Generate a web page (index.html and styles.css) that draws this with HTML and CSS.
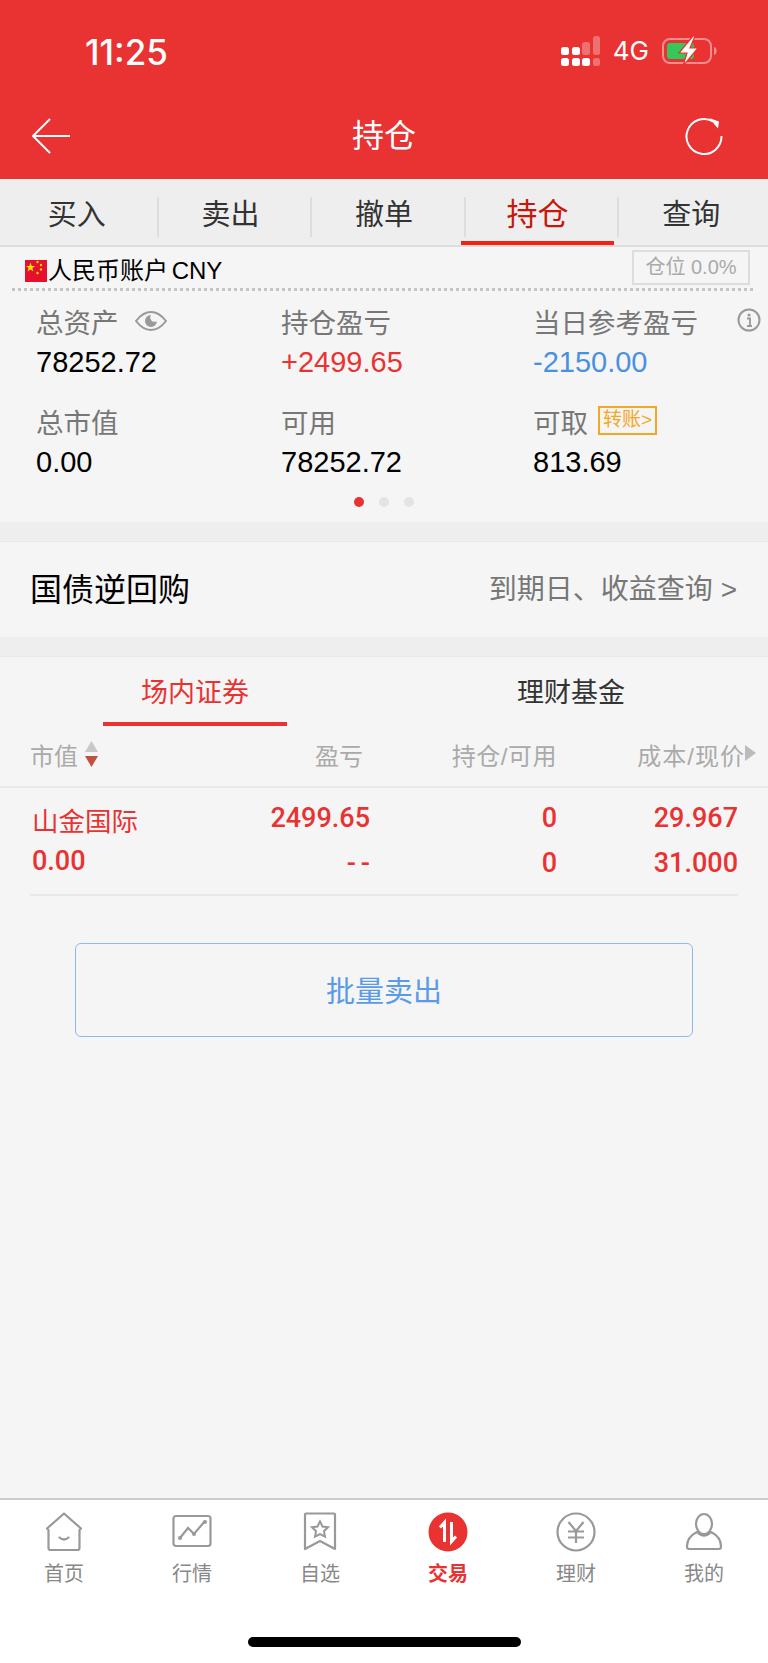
FILE: index.html
```html
<!DOCTYPE html>
<html lang="zh-CN">
<head>
    <meta charset="UTF-8">
    <meta name="viewport" content="width=device-width, initial-scale=1.0">
    <title>持仓</title>
    <link rel="stylesheet" href="styles.css">
</head>
<body>
    <header class="topbar">
        <div class="status">
            <span class="time">11:25</span>
            <div class="status-right">
                <svg class="signal" width="40" height="30" viewBox="0 0 40 30">
                    <g fill="#fff">
                        <rect x="0" y="11" width="8" height="8" rx="2.5"/>
                        <rect x="11" y="11" width="8" height="8" rx="2.5"/>
                        <rect x="0" y="22" width="8" height="8" rx="2.5"/>
                        <rect x="11" y="22" width="8" height="8" rx="2.5"/>
                        <rect x="21" y="22" width="8" height="8" rx="2.5"/>
                    </g>
                    <g fill="#fff" opacity="0.3">
                        <rect x="21" y="6" width="8" height="13" rx="2.5"/>
                        <rect x="32" y="0" width="7" height="19" rx="2.5"/>
                        <rect x="32" y="22" width="7" height="8" rx="2.5"/>
                    </g>
                </svg>
                <span class="net">4G</span>
                <svg class="battery" width="56" height="30" viewBox="0 0 56 30">
                    <rect x="1" y="3" width="48" height="24" rx="7" fill="none" stroke="#fff" stroke-opacity="0.45" stroke-width="2"/>
                    <rect x="5" y="7" width="27" height="16" rx="3" fill="#35c759"/>
                    <path d="M52 11c2 .5 2.5 2 2.5 4s-.5 3.500-2.500 4z" fill="#fff" opacity="0.45"/>
                    <path d="M31 0L17 17h8l-4 13 15-18h-8l5-12z" fill="#fff" stroke="#e93232" stroke-width="1.200"/>
                </svg>
            </div>
        </div>
        <div class="navbar">
            <svg width="40" height="36" viewBox="0 0 40 36">
                <path d="M19 1L2 18l17 17M2 18h37" fill="none" stroke="#fff" stroke-width="2"/>
            </svg>
            <span class="nav-title">持仓</span>
            <svg class="nav-refresh" width="38" height="38" viewBox="0 0 38 38">
                <path d="M28 4.500A17.500 17.500 0 1 0 36.500 19" fill="none" stroke="#fff" stroke-width="2"/>
                <path d="M24 1l10 3.500-1 7z" fill="#fff"/>
            </svg>
        </div>
    </header>

    <nav class="tabs">
        <a class="tab">买入</a>
        <a class="tab">卖出</a>
        <a class="tab">撤单</a>
        <a class="tab active">持仓</a>
        <a class="tab">查询</a>
    </nav>

    <main class="main">
        <section class="account">
            <div class="account-head">
                <div class="account-name">
                    <svg class="flag" width="22" height="22" viewBox="0 0 22 22">
                        <rect width="22" height="22" fill="#e60f2d"/>
                        <path d="M5.500 2.500l1.200 3.400h3.500l-2.800 2.200 1 3.400-2.900-2-2.900 2 1-3.400L.8 5.900h3.500z" fill="#ffde00"/>
                        <g fill="#ffde00">
                            <circle cx="12.500" cy="2" r="1.200"/>
                            <circle cx="16" cy="5" r="1.200"/>
                            <circle cx="16" cy="9.500" r="1.200"/>
                            <circle cx="12.500" cy="13" r="1.200"/>
                        </g>
                    </svg>
                    <span>人民币账户 CNY</span>
                </div>
                <span class="position-tag">仓位 0.0%</span>
            </div>
            <div class="stats">
                <div class="stat">
                    <div class="stat-label">总资产
                        <svg class="eye" width="32" height="20" viewBox="0 0 32 20">
                            <path d="M1 10C6 3.500 11 1 16 1s10 2.500 15 9c-5 6.500-10 9-15 9S6 16.500 1 10z" fill="none" stroke="#999" stroke-width="2"/>
                            <path d="M16 4a6 6 0 1 0 6 6c-1 1.500-5 1-6-1s-1-3.500 0-5z" fill="#999"/>
                        </svg>
                    </div>
                    <div class="stat-value">78252.72</div>
                </div>
                <div class="stat">
                    <div class="stat-label">持仓盈亏</div>
                    <div class="stat-value up">+2499.65</div>
                </div>
                <div class="stat">
                    <div class="stat-label">当日参考盈亏</div>
                    <div class="stat-value down">-2150.00</div>
                    <svg class="info" width="24" height="24" viewBox="0 0 24 24">
                        <circle cx="12" cy="12" r="10.500" fill="none" stroke="#999" stroke-width="2"/>
                        <circle cx="12" cy="7" r="1.600" fill="#999"/>
                        <path d="M10 10.500h3v7M10 18h5" fill="none" stroke="#999" stroke-width="1.800"/>
                    </svg>
                </div>
                <div class="stat">
                    <div class="stat-label">总市值</div>
                    <div class="stat-value">0.00</div>
                </div>
                <div class="stat">
                    <div class="stat-label">可用</div>
                    <div class="stat-value">78252.72</div>
                </div>
                <div class="stat">
                    <div class="stat-label">可取 <span class="transfer">转账&gt;</span></div>
                    <div class="stat-value">813.69</div>
                </div>
            </div>
            <div class="dots">
                <i class="dot on"></i>
                <i class="dot"></i>
                <i class="dot"></i>
            </div>
        </section>

        <div class="band"></div>

        <section class="repo">
            <span class="repo-title">国债逆回购</span>
            <span class="repo-link">到期日、收益查询 &gt;</span>
        </section>

        <div class="band"></div>

        <section class="subtabs">
            <div class="subtab active"><span>场内证券</span></div>
            <div class="subtab"><span>理财基金</span></div>
        </section>

        <div class="table-head">
            <div class="col-name">市值
                <svg class="sort" width="15" height="28" viewBox="0 0 15 28">
                    <path d="M7.500 1l6.500 11H1z" fill="#c8c8c8"/>
                    <path d="M1 16h13l-6.500 11z" fill="#c0503f"/>
                </svg>
            </div>
            <div class="col-pl">盈亏</div>
            <div class="col-qty">持仓/可用</div>
            <div class="col-cost">成本/现价<i class="more"></i></div>
        </div>

        <div class="holding">
            <div class="col-name">
                <div class="stock-name">山金国际</div>
                <div class="num stock-value">0.00</div>
            </div>
            <div class="col-pl num">
                <div>2499.65</div>
                <div class="dash">--</div>
            </div>
            <div class="col-qty num">
                <div>0</div>
                <div>0</div>
            </div>
            <div class="col-cost num">
                <div>29.967</div>
                <div>31.000</div>
            </div>
        </div>

        <button class="sell-all" type="button">批量卖出</button>
    </main>

    <footer class="tabbar">
        <div class="tabbar-items">
            <a class="tabbar-item">
                <svg width="40" height="40" viewBox="0 0 40 40">
                    <path d="M20 1.500L3 16.500l1.500 1.500V36q0 2 2 2h27q2 0 2-2V18l1.500-1.500z" fill="none" stroke="#999" stroke-width="2.200" stroke-linejoin="round"/>
                    <path d="M15.500 25.500q4.500 4 9 0" fill="none" stroke="#999" stroke-width="2.200" stroke-linecap="round"/>
                </svg>
                <span>首页</span>
            </a>
            <a class="tabbar-item">
                <svg width="40" height="40" viewBox="0 0 40 40">
                    <rect x="1.500" y="4" width="37" height="30" rx="2.500" fill="none" stroke="#999" stroke-width="2.200"/>
                    <path d="M8 26l8-10 6 6 11-13" fill="none" stroke="#999" stroke-width="2.200"/>
                    <circle cx="8" cy="26" r="2" fill="#999"/>
                    <circle cx="22" cy="22" r="2" fill="#999"/>
                    <circle cx="33" cy="10" r="2" fill="#999"/>
                </svg>
                <span>行情</span>
            </a>
            <a class="tabbar-item">
                <svg width="40" height="40" viewBox="0 0 40 40">
                    <path d="M6 1.500h28q1 0 1 1V37l-15-8-15 8V2.500q0-1 1-1z" fill="none" stroke="#999" stroke-width="2.200" stroke-linejoin="round"/>
                    <path d="M20 9.500l2.500 5 5.500.8-4 3.900 1 5.500-5-2.600-5 2.600 1-5.500-4-3.900 5.500-.8z" fill="none" stroke="#999" stroke-width="2"/>
                </svg>
                <span>自选</span>
            </a>
            <a class="tabbar-item active">
                <svg width="40" height="40" viewBox="0 0 40 40">
                    <circle cx="20" cy="20" r="19.500" fill="#e93232"/>
                    <path d="M16.500 30V10.500L12 15.500M23.500 10v19.500l4.500-5" fill="none" stroke="#fff" stroke-width="3"/>
                </svg>
                <span>交易</span>
            </a>
            <a class="tabbar-item">
                <svg width="40" height="40" viewBox="0 0 40 40">
                    <circle cx="20" cy="20" r="18.500" fill="none" stroke="#999" stroke-width="2.200"/>
                    <path d="M12.500 10l7.500 9 7.500-9M12 19.500h16M12 25.500h16M20 19v12" fill="none" stroke="#999" stroke-width="2.200"/>
                </svg>
                <span>理财</span>
            </a>
            <a class="tabbar-item">
                <svg width="40" height="40" viewBox="0 0 40 40">
                    <ellipse cx="20" cy="12" rx="8" ry="10" fill="none" stroke="#999" stroke-width="2.200"/>
                    <path d="M13 20C7 23 3 27 3 34.500q0 2.500 2 2.500h30q2 0 2-2.500C37 27 33 23 27 20q-7 7-14 0z" fill="none" stroke="#999" stroke-width="2.200"/>
                </svg>
                <span>我的</span>
            </a>
        </div>
        <div class="home-bar"></div>
    </footer>
</body>
</html>
```

FILE: styles.css
```css
* {
    box-sizing: border-box;
}

body {
    margin: 0;
    width: 768px;
    height: 1663px;
    display: flex;
    flex-direction: column;
    background-color: #f5f5f5;
    font-family: "Liberation Sans", "Noto Sans CJK SC", sans-serif;
    color: #000;
    overflow: hidden;
}

svg {
    display: block;
}

/* red header */
.topbar {
    height: 179px;
    background-color: #e93232;
    color: #fff;
}

.status {
    height: 99px;
    display: flex;
    justify-content: space-between;
    align-items: flex-start;
    padding: 30px 50px 0 85px;
}

.time {
    font-family: Inter, sans-serif;
    font-size: 35px;
    font-weight: 500;
    line-height: 44px;
}

.status-right {
    display: flex;
    align-items: center;
    padding-top: 6px;
}

.signal {
    margin-right: 12px;
}

.net {
    font-family: Inter, sans-serif;
    font-size: 26px;
    line-height: 30px;
    margin-right: 13px;
}

.navbar {
    height: 80px;
    display: grid;
    grid-template-columns: 1fr auto 1fr;
    align-items: center;
    padding: 0 31px 6px 31px;
}

.nav-title {
    font-size: 32px;
    line-height: 44px;
}

.nav-refresh {
    justify-self: end;
    margin-right: 14px;
}

/* trade tabs */
.tabs {
    height: 68px;
    display: flex;
    background-color: #eee;
    border-bottom: 2px solid #ddd;
}

.tab {
    flex: 1;
    position: relative;
    text-align: center;
    font-size: 29px;
    line-height: 72px;
    color: #333;
}

.tab + .tab::before {
    content: "";
    position: absolute;
    left: 3px;
    top: 18px;
    height: 40px;
    border-left: 2px solid #ddd;
}

.tab.active {
    font-size: 31px;
    color: #c8180c;
}

.tab.active::after {
    content: "";
    position: absolute;
    left: 0;
    right: 0;
    bottom: 0;
    height: 4px;
    background-color: #f5220f;
}

.main {
    flex: 1;
}

/* account summary */
.account-head {
    height: 44px;
    margin: 0 12px;
    padding: 3px 6px 0 13px;
    display: flex;
    justify-content: space-between;
    align-items: flex-start;
    background-image: linear-gradient(to right, #c4c4c4 3px, transparent 3px);
    background-size: 6px 3px;
    background-repeat: repeat-x;
    background-position: left bottom;
}

.account-name {
    display: flex;
    align-items: center;
    height: 36px;
    font-size: 24px;
    word-spacing: -3px;
}

.flag {
    margin: 6px 1px 0 0;
}

.position-tag {
    width: 118px;
    height: 35px;
    border: 2px solid #ddd;
    text-align: center;
    font-size: 20px;
    line-height: 31px;
    color: #aaa;
}

.stats {
    display: grid;
    grid-template-columns: 245px 252px 1fr;
    grid-template-rows: 100px 91px;
    padding: 9px 0 0 36px;
}

.stat {
    position: relative;
}

.stat-label {
    display: flex;
    align-items: center;
    height: 41px;
    font-size: 27.5px;
    color: #777;
}

.stat-value {
    font-size: 29px;
    line-height: 42px;
}

.up {
    color: #e93232;
}

.down {
    color: #4a90e2;
}

.eye {
    margin-left: 16px;
}

.info {
    position: absolute;
    top: 8px;
    right: 7px;
}

.transfer {
    height: 29px;
    margin-left: 10px;
    padding: 0 3px;
    border: 2px solid #f5a623;
    font-size: 19px;
    line-height: 24px;
    color: #f5a623;
}

.dots {
    height: 31px;
    display: flex;
    justify-content: center;
    gap: 15px;
    padding-top: 6px;
}

.dot {
    width: 10px;
    height: 10px;
    border-radius: 50%;
    background-color: #e4e4e4;
}

.dot.on {
    background-color: #e93232;
}

.band {
    height: 20px;
    background-color: #eee;
    border-bottom: 1px solid #e8e8e8;
}

/* reverse repo row */
.repo {
    height: 95px;
    display: flex;
    justify-content: space-between;
    align-items: center;
    padding: 0 31px 5px 30px;
}

.repo-title {
    font-size: 32px;
}

.repo-link {
    font-size: 28px;
    color: #777;
}

/* holdings */
.subtabs {
    display: flex;
    height: 69px;
    padding-left: 103px;
}

.subtab {
    flex: none;
    width: 184px;
    margin-right: 192px;
    text-align: center;
    font-size: 27px;
    line-height: 72px;
    color: #333;
}

.subtab.active {
    color: #e93232;
    border-bottom: 4px solid #e93232;
}

.table-head,
.holding {
    display: grid;
    grid-template-columns: 180px 153px 194px 1fr;
}

.table-head {
    height: 62px;
    align-items: center;
    padding: 0 30px 4px;
    font-size: 24px;
    color: #aaa;
    border-bottom: 2px solid #e8e8e8;
}

.table-head .col-name {
    display: flex;
    align-items: center;
    gap: 6px;
}

.col-pl,
.col-qty,
.col-cost {
    text-align: right;
}

.table-head .col-qty {
    letter-spacing: 0.5px;
}

.table-head .col-cost {
    position: relative;
    margin-right: -7px;
    letter-spacing: 1px;
    white-space: nowrap;
}

.more {
    position: absolute;
    right: -11px;
    top: 8px;
    border-left: 11px solid #bbb;
    border-top: 8px solid transparent;
    border-bottom: 8px solid transparent;
}

.holding {
    height: 108px;
    margin: 0 30px;
    padding-top: 8px;
    color: #e93232;
    border-bottom: 2px solid #e8e8e8;
}

.stock-name {
    font-size: 26.5px;
    line-height: 43px;
    padding: 5px 0 0 2px;
    box-sizing: content-box;
}

.stock-value {
    line-height: 34px;
    padding-left: 2px;
}

.num {
    font-family: Roboto, sans-serif;
    font-size: 27px;
    font-weight: 500;
}

.col-pl.num,
.col-qty.num,
.col-cost.num {
    line-height: 45px;
}

.col-pl.num {
    margin-right: -7px;
}

.dash {
    letter-spacing: 5px;
    margin-right: -5px;
}

.sell-all {
    display: block;
    width: 618px;
    height: 94px;
    margin: 47px 0 0 75px;
    padding-bottom: 4px;
    border: 1.5px solid #8dbaee;
    border-radius: 6px;
    background: none;
    font-family: inherit;
    font-size: 29px;
    color: #5a9be8;
}

/* bottom bar */
.tabbar {
    height: 165px;
    background-color: #fff;
    border-top: 2px solid #ccc;
}

.tabbar-items {
    display: flex;
    height: 137px;
    padding-top: 12px;
}

.tabbar-item {
    flex: 1;
    display: flex;
    flex-direction: column;
    align-items: center;
    font-size: 20px;
    line-height: 30px;
    color: #888;
}

.tabbar-item span {
    margin-top: 7px;
}

.tabbar-item.active {
    color: #e93232;
    font-weight: 700;
}

.home-bar {
    width: 273px;
    height: 10px;
    margin-left: 248px;
    border-radius: 5px;
    background-color: #000;
}
```
